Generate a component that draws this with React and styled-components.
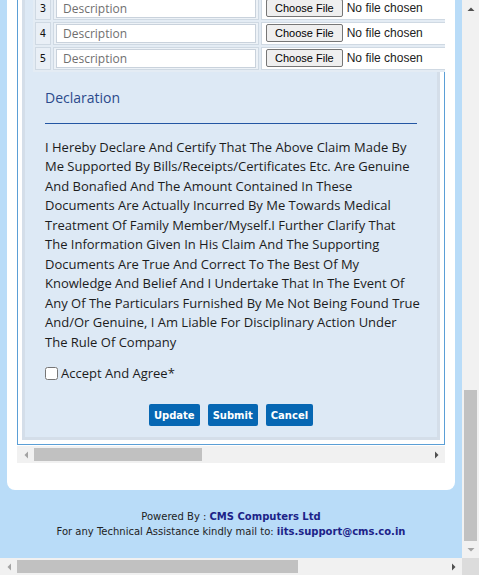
import React from "react";
import styled, { createGlobalStyle } from "styled-components";

const GlobalStyle = createGlobalStyle`
  html, body { margin: 0; padding: 0; overflow: hidden; }
  body { font-family: "Open Sans", sans-serif; background: #b9dcf8; }
  *, *::before, *::after { box-sizing: border-box; }
`;

const Frame = styled.div`
  width: 479px;
  height: 575px;
  display: grid;
  grid-template-columns: 462px 17px;
  grid-template-rows: 558px 17px;
`;

const Viewport = styled.div`
  overflow: hidden;
  display: flex;
  flex-direction: column;
  justify-content: flex-end;
  background: #b9dcf8;
`;

const Page = styled.div`
  flex-shrink: 0;
  padding: 0 7px;
`;

const Card = styled.div`
  background: #fff;
  border-radius: 0 0 8px 8px;
  padding: 12px 10px 27px;
`;

const CardTitle = styled.h2`
  margin: 0 0 10px;
  font-size: 15px;
  font-weight: 600;
  color: #2b4a8c;
`;

const ScrollArea = styled.div`
  overflow: hidden;
`;

const BorderedBox = styled.div`
  border: 1px solid #5b9fd6;
  padding: 4px;
  background: #fff;
`;

const Panel = styled.div`
  border: 3px solid #d4dee9;
  background: #dde9f5;
  padding: 8px 0 11px;
`;

const Table = styled.table`
  margin-left: 8px;
  border-collapse: separate;
  border-spacing: 2px;
  background: #e4ecf4;
`;

const HeadCell = styled.th`
  border: 1px solid #cfd9e3;
  background: #c9dcef;
  padding: ${(p) => (p.$narrow ? "2px 0" : "2px 4px")};
  font-family: "DejaVu Sans", Verdana, sans-serif;
  font-size: 10px;
  font-weight: bold;
  color: #1f3b6e;
  text-align: ${(p) => (p.$narrow ? "center" : "left")};
`;

const NumCell = styled.td`
  border: 1px solid #cfd9e3;
  background: #e9eff6;
  padding: 0;
  vertical-align: middle;
`;

const NumBox = styled.span`
  display: block;
  width: 14px;
  text-align: center;
  font-family: "DejaVu Sans", Verdana, sans-serif;
  font-size: 10px;
  color: #111;
`;

const DescCell = styled.td`
  border: 1px solid #cfd9e3;
  background: #edf2f7;
  padding: 1px 2px;
  vertical-align: middle;
`;

const FileCell = styled.td`
  border: 1px solid #cfd9e3;
  background: #fff;
  padding: 0 4px;
  vertical-align: middle;
`;

const DescInput = styled.input`
  display: block;
  width: 200px;
  height: 19px;
  margin: 0;
  border: 1px solid #c9d2dc;
  background: #fff;
  padding: 0 6px;
  font-family: "Open Sans", sans-serif;
  font-size: 12px;
  color: #222;
  outline: none;
  &::placeholder { color: #6f6f6f; }
`;

const FileField = styled.span`
  display: flex;
  align-items: center;
  gap: 4px;
  width: 198px;
  white-space: nowrap;
`;

const FileButton = styled.button`
  height: 18px;
  padding: 0 8px;
  margin: 0;
  font-family: "Liberation Sans", Arial, sans-serif;
  font-size: 11px;
  color: #000;
  background: #efefef;
  border: 1px solid #767676;
  border-radius: 2px;
`;

const FileStatus = styled.span`
  font-family: "Liberation Sans", Arial, sans-serif;
  font-size: 12px;
  color: #222;
`;

const Declaration = styled.section`
  padding: 16px 14px 0 20px;
`;

const Heading = styled.h3`
  margin: 0 6px 0 0;
  padding-bottom: 15px;
  border-bottom: 1px solid #2356a3;
  font-size: 14px;
  line-height: 20px;
  font-weight: 400;
  color: #2b4a8c;
`;

const Statement = styled.p`
  margin: 14px 0 0;
  font-size: 13px;
  line-height: 19.5px;
  color: #1c1c1c;
`;

const AgreeLabel = styled.label`
  margin-top: 11px;
  height: 20px;
  display: flex;
  align-items: center;
  font-size: 13px;
  color: #1c1c1c;
`;

const Check = styled.input`
  width: 13px;
  height: 13px;
  margin: 0 3px 0 0;
`;

const Actions = styled.div`
  margin-top: 21px;
  display: flex;
  justify-content: center;
  gap: 8px;
  margin-right: 6px;
`;

const ActionButton = styled.button`
  height: 22px;
  padding: 0 5px;
  border: none;
  border-radius: 2px;
  background: #0667b3;
  color: #fff;
  font-family: "DejaVu Sans", Verdana, sans-serif;
  font-size: 10px;
  font-weight: bold;
`;

const Footer = styled.footer`
  padding: 19px 0;
  text-align: center;
  font-family: "DejaVu Sans", Verdana, sans-serif;
  font-size: 10px;
  line-height: 15px;
  color: #222;
`;

const FooterStrong = styled.b`
  color: #1c2388;
`;

/* scrollbars */
const HBar = styled.div`
  display: flex;
  height: 17px;
  background: #f1f1f1;
  margin-top: ${(p) => (p.$inner ? "1px" : "0")};
`;

const VBar = styled.div`
  display: flex;
  flex-direction: column;
  width: 17px;
  background: #f1f1f1;
`;

const ArrowBox = styled.div`
  flex: 0 0 17px;
  width: 17px;
  height: 17px;
  display: flex;
  align-items: center;
  justify-content: center;
`;

const HTrack = styled.div`
  flex: 1;
  display: flex;
  align-items: center;
`;

const VTrack = styled.div`
  flex: 1;
  display: flex;
  flex-direction: column;
  justify-content: flex-end;
  align-items: center;
`;

const Thumb = styled.div`
  background: #c1c1c1;
  flex: 0 0 auto;
`;

const Corner = styled.div`
  background: #dcdcdc;
`;

const ARROWS = {
  up: "0.5,6 4,2.5 7.5,6",
  down: "0.5,2 4,5.5 7.5,2",
  left: "6,0.5 2.5,4 6,7.5",
  right: "2,0.5 5.5,4 2,7.5",
};

function Arrow({ dir, active }) {
  return (
    <ArrowBox>
      <svg width="8" height="8" viewBox="0 0 8 8">
        <polygon points={ARROWS[dir]} fill={active ? "#505050" : "#a3a3a3"} />
      </svg>
    </ArrowBox>
  );
}

function HScrollbar({ thumb, inner }) {
  return (
    <HBar $inner={inner}>
      <Arrow dir="left" />
      <HTrack>
        <Thumb style={{ width: thumb, height: 13 }} />
      </HTrack>
      <Arrow dir="right" active />
    </HBar>
  );
}

function VScrollbar({ thumb }) {
  return (
    <VBar>
      <Arrow dir="up" active />
      <VTrack>
        <Thumb style={{ height: thumb, width: 13 }} />
      </VTrack>
      <Arrow dir="down" />
    </VBar>
  );
}

const rows = [1, 2, 3, 4, 5];

const statementLines = [
  "I Hereby Declare And Certify That The Above Claim Made By",
  "Me Supported By Bills/Receipts/Certificates Etc. Are Genuine",
  "And Bonafied And The Amount Contained In These",
  "Documents Are Actually Incurred By Me Towards Medical",
  "Treatment Of Family Member/Myself.I Further Clarify That",
  "The Information Given In His Claim And The Supporting",
  "Documents Are True And Correct To The Best Of My",
  "Knowledge And Belief And I Undertake That In The Event Of",
  "Any Of The Particulars Furnished By Me Not Being Found True",
  "And/Or Genuine, I Am Liable For Disciplinary Action Under",
  "The Rule Of Company",
];

export default function App() {
  return (
    <>
      <GlobalStyle />
      <Frame>
        <Viewport>
          <Page>
            <Card>
              <CardTitle>Medical Reimbursement Claim</CardTitle>
              <ScrollArea>
                <BorderedBox>
                  <Panel>
                    <Table>
                      <thead>
                        <tr>
                          <HeadCell $narrow>#</HeadCell>
                          <HeadCell>Description</HeadCell>
                          <HeadCell>Attachment</HeadCell>
                        </tr>
                      </thead>
                      <tbody>
                        {rows.map((n) => (
                          <tr key={n}>
                            <NumCell>
                              <NumBox>{n}</NumBox>
                            </NumCell>
                            <DescCell>
                              <DescInput placeholder="Description" />
                            </DescCell>
                            <FileCell>
                              <FileField>
                                <FileButton type="button">Choose File</FileButton>
                                <FileStatus>No file chosen</FileStatus>
                              </FileField>
                            </FileCell>
                          </tr>
                        ))}
                      </tbody>
                    </Table>
                    <Declaration>
                      <Heading>Declaration</Heading>
                      <Statement>
                        {statementLines.map((line, i) => (
                          <React.Fragment key={i}>
                            {line}
                            {i < statementLines.length - 1 ? <br /> : null}
                          </React.Fragment>
                        ))}
                      </Statement>
                      <AgreeLabel>
                        <Check type="checkbox" />
                        Accept And Agree*
                      </AgreeLabel>
                      <Actions>
                        <ActionButton type="button">Update</ActionButton>
                        <ActionButton type="button">Submit</ActionButton>
                        <ActionButton type="button">Cancel</ActionButton>
                      </Actions>
                    </Declaration>
                  </Panel>
                </BorderedBox>
              </ScrollArea>
              <HScrollbar thumb={168} inner />
            </Card>
            <Footer>
              <div>
                Powered By : <FooterStrong>CMS Computers Ltd</FooterStrong>
              </div>
              <div>
                For any Technical Assistance kindly mail to:{" "}
                <FooterStrong>iits.support@cms.co.in</FooterStrong>
              </div>
            </Footer>
          </Page>
        </Viewport>
        <VScrollbar thumb={151} />
        <HScrollbar thumb={281} />
        <Corner />
      </Frame>
    </>
  );
}
